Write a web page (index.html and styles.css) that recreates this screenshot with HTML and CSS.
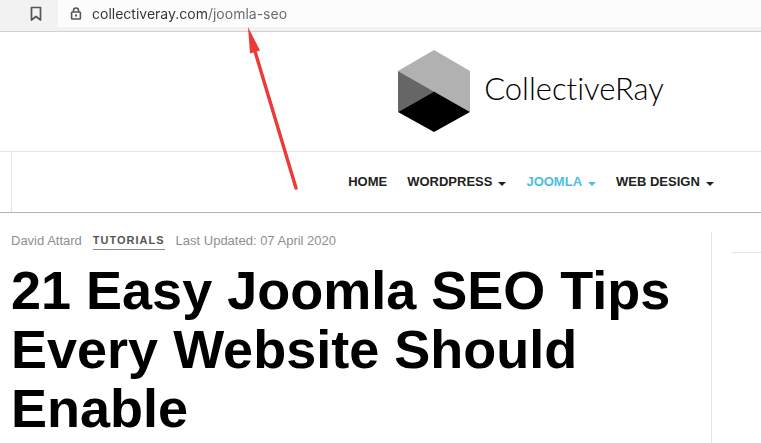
FILE: index.html
```
<!DOCTYPE html>
<html lang="en">
<head>
  <meta charset="UTF-8" />
  <meta name="viewport" content="width=device-width, initial-scale=1.0"/>
  <title>21 Easy Joomla SEO Tips | CollectiveRay</title>
  <link rel="stylesheet" href="styles.css">
</head>
<body>
  <div class="toolbar">
    <button class="bookmark-btn" type="button" aria-label="Bookmark">
      <svg width="12" height="16" viewBox="0 0 12 16"><path d="M1.5 1.5h9v12.5l-4.5-3.5-4.5 3.5z" fill="none" stroke="#555" stroke-width="1.7" stroke-linejoin="round"/></svg>
    </button>
    <div class="address">
      <svg width="12" height="14" viewBox="0 0 12 14">
        <path d="M3.5 5V3.5a2.5 2.5 0 0 1 5 0V5" fill="none" stroke="#555" stroke-width="1.6"/>
        <rect x="1.6" y="5" width="8.8" height="7" rx=".8" fill="none" stroke="#555" stroke-width="1.6"/>
        <rect x="5" y="7.5" width="2" height="2" fill="#555"/>
      </svg>
      <input class="url" type="text" aria-label="Address" value="collectiveray.com/joomla-seo">
    </div>
  </div>

  <header>
    <a href="#" class="logo">
      <svg width="72" height="82" viewBox="0 0 72 82">
        <path d="M36 0L72 21V62L0 21z" fill="#b1b1b1"/>
        <path d="M0 21L36 41.5 0 62z" fill="#666"/>
        <path d="M36 41.5L72 62 36 82 0 62z" fill="#000"/>
      </svg>
      <span>CollectiveRay</span>
    </a>
  </header>

  <div class="nav-bar">
    <nav>
      <a href="#">Home</a>
      <a href="#" class="has-menu">WordPress</a>
      <a href="#" class="has-menu active">Joomla</a>
      <a href="#" class="has-menu">Web Design</a>
    </nav>
  </div>

  <div class="container">
    <article>
      <div class="meta">
        <span>David Attard</span>
        <a href="#">Tutorials</a>
        <span>Last Updated: 07 April 2020</span>
      </div>
      <h1>21 Easy Joomla SEO Tips Every Website Should Enable</h1>
    </article>
    <aside></aside>
  </div>

  <!-- Arrow pointing at the page slug -->
  <svg class="arrow" width="60" height="170" viewBox="0 0 60 170">
    <path d="M14 20L56 160" stroke="#ee3a36" stroke-width="3.4" stroke-linecap="round"/>
    <path d="M8 -1L20 22.5 10 25.5z" fill="#ee3a36"/>
  </svg>
</body>
</html>
```

FILE: styles.css
```
:root {
  --text: #222;
  --muted: #8f8f8f;
  --accent: #4bbde5;
  --line: #e5e5e5;
}
*, *::before, *::after { box-sizing: border-box; margin: 0; padding: 0; }
body { font-family: "Helvetica Neue", "Liberation Sans", Arial, sans-serif; background: #fff; color: var(--text); position: relative; min-height: 100vh; display: flex; flex-direction: column; overflow-x: hidden; }
a { color: inherit; text-decoration: none; }
svg { display: block; }

/* Browser toolbar */
.toolbar { display: flex; height: 32px; padding-bottom: 4px; background: #f2f2f2; border-bottom: 1px solid #d2d2d2; }
.bookmark-btn { width: 58px; padding-left: 30px; border: none; background: none; cursor: pointer; }
.address { flex: 1; display: flex; align-items: center; gap: 10px; padding-left: 12px; background: #fcfcfc; }
.url { flex: 1; border: none; outline: none; font: 14px Inter, sans-serif; color: transparent; background: linear-gradient(90deg, #333 117px, #666 117px); background-clip: text; -webkit-background-clip: text; }

header { display: flex; justify-content: center; padding: 18px 0 19px 301px; border-bottom: 1px solid var(--line); }
.logo { display: flex; align-items: center; gap: 14px; color: #000; font: 300 31px/40px Lato, sans-serif; font-variant-ligatures: none; }
.logo span { padding-bottom: 6px; }

.nav-bar { padding-left: 11px; border-bottom: 1px solid #b4b4b4; }
nav { display: flex; justify-content: center; gap: 20px; padding-left: 289px; border-left: 1px solid var(--line); }
nav a { display: flex; align-items: center; gap: 6px; font-size: 13px; font-weight: bold; line-height: 60px; text-transform: uppercase; white-space: nowrap; }
nav a.active { color: var(--accent); }
.has-menu::after { content: ''; border: 4px solid transparent; border-top-color: currentColor; border-bottom: 0; margin-top: 3px; }

.container { flex: 1; display: grid; grid-template-columns: 1fr 49px; padding: 19px 0 0 11px; }
article { border-right: 1px solid var(--line); }
aside { margin: 20px 0 0 20px; border-top: 1px solid var(--line); }
.meta { display: flex; gap: 11px; font-size: 13px; line-height: 17px; color: var(--muted); }
.meta a { font-size: 11px; font-weight: bold; letter-spacing: 1px; text-transform: uppercase; color: #555; border-bottom: 1px solid #888; }
h1 { margin-top: 11px; font-size: 54px; line-height: 59px; color: #000; }

.arrow { position: absolute; top: 28px; left: 240px; overflow: visible; }
```
